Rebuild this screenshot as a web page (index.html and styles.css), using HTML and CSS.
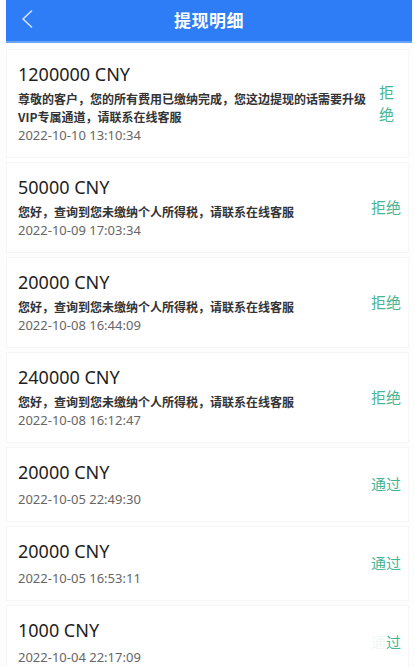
FILE: index.html
```html
<!DOCTYPE html>
<html lang="zh-CN">
<head>
<meta charset="utf-8">
<meta name="viewport" content="width=device-width, initial-scale=1">
<title>提现明细</title>
<link rel="stylesheet" href="styles.css">
</head>
<body>
<div class="page">
  <header class="topbar">
    <span class="back">
      <svg width="12" height="18" viewBox="0 0 12 18"><path d="M10.5 1 L2 9 L10.5 17" fill="none" stroke="#d6e4ff" stroke-width="1.6" stroke-linecap="round" stroke-linejoin="round"/></svg>
    </span>
    <h1 class="title">提现明细</h1>
  </header>

  <main class="list">
    <div class="card">
      <div class="info">
        <div class="amount">1200000 CNY</div>
        <div class="msg">尊敬的客户，您的所有费用已缴纳完成，您这边提现的话需要升级VIP专属通道，请联系在线客服</div>
        <div class="date">2022-10-10 13:10:34</div>
      </div>
      <div class="status narrow">拒绝</div>
    </div>

    <div class="card">
      <div class="info">
        <div class="amount">50000 CNY</div>
        <div class="msg">您好，查询到您未缴纳个人所得税，请联系在线客服</div>
        <div class="date">2022-10-09 17:03:34</div>
      </div>
      <div class="status">拒绝</div>
    </div>

    <div class="card">
      <div class="info">
        <div class="amount">20000 CNY</div>
        <div class="msg">您好，查询到您未缴纳个人所得税，请联系在线客服</div>
        <div class="date">2022-10-08 16:44:09</div>
      </div>
      <div class="status">拒绝</div>
    </div>

    <div class="card">
      <div class="info">
        <div class="amount">240000 CNY</div>
        <div class="msg">您好，查询到您未缴纳个人所得税，请联系在线客服</div>
        <div class="date">2022-10-08 16:12:47</div>
      </div>
      <div class="status">拒绝</div>
    </div>

    <div class="card">
      <div class="info">
        <div class="amount">20000 CNY</div>
        <div class="date spaced">2022-10-05 22:49:30</div>
      </div>
      <div class="status">通过</div>
    </div>

    <div class="card">
      <div class="info">
        <div class="amount">20000 CNY</div>
        <div class="date spaced">2022-10-05 16:53:11</div>
      </div>
      <div class="status">通过</div>
    </div>

    <div class="card">
      <div class="info">
        <div class="amount">1000 CNY</div>
        <div class="date spaced">2022-10-04 22:17:09</div>
      </div>
      <div class="status"><span class="faded">通</span>过</div>
    </div>
  </main>
</div>
</body>
</html>
```

FILE: styles.css
```css
* {
  box-sizing: border-box;
}

html, body {
  margin: 0;
  padding: 0;
  background: #fdfdfd;
}

body {
  font-family: "Noto Sans", "Noto Sans CJK SC", sans-serif;
  color: #1c1c1c;
}

.page {
  padding: 0 3px 0 6px;
}

.topbar {
  position: relative;
  height: 43px;
  background: #2e7cf6;
  border-bottom: 2px solid #6aa4f9;
  display: flex;
  align-items: center;
  justify-content: center;
}

.back {
  position: absolute;
  left: 15px;
  top: 10px;
  width: 12px;
  height: 18px;
  display: block;
}

.back svg {
  display: block;
}

.title {
  margin: 0;
  font-family: "Noto Sans CJK SC", sans-serif;
  font-size: 17px;
  font-weight: 700;
  color: #ffffff;
  letter-spacing: 0.5px;
  line-height: 1;
  margin-top: -2px;
}

.list {
  display: flex;
  flex-direction: column;
  gap: 4px;
  padding-top: 6px;
  margin-right: 3px;
}

.card {
  display: flex;
  align-items: center;
  background: #ffffff;
  border: 1px solid #f5f6f6;
  padding: 12px 7px 13px 11px;
}

.info {
  flex: 1;
  min-width: 0;
}

.amount {
  font-size: 18px;
  line-height: 24px;
  color: #1e1e1e;
}

.msg {
  margin-top: 4px;
  font-family: "Noto Sans CJK SC", sans-serif;
  font-size: 12px;
  line-height: 18px;
  font-weight: 700;
  color: #333333;
}

.date {
  font-size: 13px;
  line-height: 18px;
  color: #666666;
}

.date.spaced {
  margin-top: 6px;
}

.status {
  flex: none;
  font-family: "Noto Sans CJK SC", sans-serif;
  font-size: 15px;
  line-height: 22px;
  color: #47b593;
}

.status.narrow {
  width: 22px;
}

.faded {
  color: #f1f6f4;
}
```
